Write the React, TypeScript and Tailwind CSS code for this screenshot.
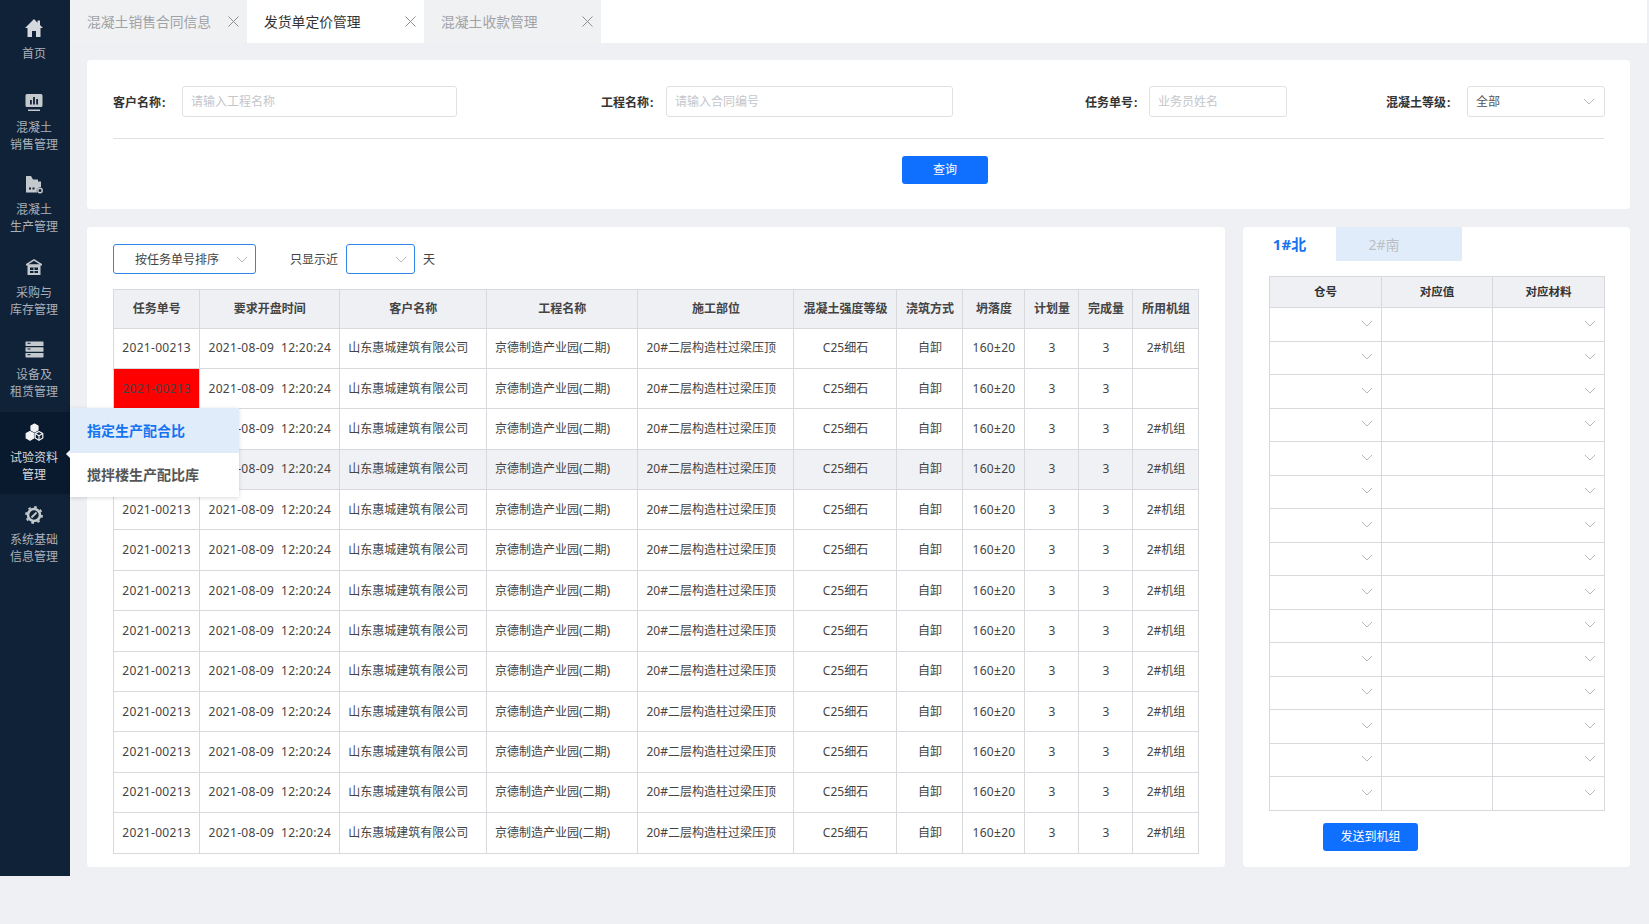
import React from "react";

const Chevron = ({ className = "" }: { className?: string }) => (
  <svg width="12" height="7" viewBox="0 0 12 7" fill="none" className={className}>
    <path d="M1 1l5 5 5-5" stroke="#b5b8bd" strokeWidth="1" />
  </svg>
);

const X = () => (
  <svg width="11" height="11" viewBox="0 0 11 11" fill="none">
    <path d="M0.5 0.5l10 10M10.5 0.5l-10 10" stroke="#8f8f8f" strokeWidth="1" />
  </svg>
);

const ic = "#c4c9ce";
const bg = "#102237";
const icons: Record<string, React.ReactNode> = {
  home: (
    <svg width="20" height="20" viewBox="0 0 20 20">
      <path d="M10 1L1 10h2.500v9h4.500v-6h4v6h4.500v-9H19l-3-3V2.500h-2.500v2.200z" fill="#d5d8dc" />
    </svg>
  ),
  chart: (
    <svg width="18" height="19" viewBox="0 0 18 19">
      <path d="M2 1h14a1.500 1.500 0 0 1 1.500 1.500v10a1.500 1.500 0 0 1-1.500 1.500H2a1.500 1.500 0 0 1-1.500-1.500v-10A1.500 1.500 0 0 1 2 1z" fill={ic} />
      <path d="M5 7h1.800v4.500H5zM8.100 4h1.800v7.500H8.100zM11.200 6h1.800v5.500h-1.800z" fill={bg} />
      <rect x="3" y="16.500" width="12" height="1.500" fill={ic} />
    </svg>
  ),
  factory: (
    <svg width="19" height="19" viewBox="0 0 19 19">
      <path d="M1 1h5l2 3.500h5v2h3V12a4 4 0 0 0-4 5.500H1z" fill={ic} />
      <rect x="4" y="12.500" width="2" height="2" fill={bg} />
      <rect x="7.500" y="12.500" width="2" height="2" fill={bg} />
      <circle cx="15" cy="15.500" r="2.200" fill="none" stroke={ic} strokeWidth="1.400" />
    </svg>
  ),
  store: (
    <svg width="18" height="18" viewBox="0 0 18 18">
      <path d="M9 1L1 6v1.500h1.500V17h13V7.500H17V6z" fill={ic} />
      <path d="M9 2.800L3.500 6.300h11z" fill={bg} />
      <path d="M5 9.500h8V15H5z" fill={bg} />
      <path d="M8.500 9.500h1V15h-1zM5 12h8v1H5z" fill={ic} />
    </svg>
  ),
  server: (
    <svg width="19" height="17" viewBox="0 0 19 17">
      <rect x="0.500" y="0.500" width="18" height="4.500" rx="0.600" fill={ic} />
      <rect x="0.500" y="6.200" width="18" height="4.500" rx="0.600" fill={ic} />
      <rect x="0.500" y="11.900" width="18" height="4.500" rx="0.600" fill={ic} />
      <path d="M2.500 2.300h3M2.500 8h3M2.500 13.700h3" stroke={bg} strokeWidth="1" />
    </svg>
  ),
  cubes: (
    <svg width="19" height="18" viewBox="0 0 19 18">
      <g stroke="#f2f3f4" strokeWidth="1.200" strokeLinejoin="round">
        <path d="M9.500 1l3.500 2v4l-3.500 2L6 7V3z" fill="#f2f3f4" />
        <path d="M5 8.500l3.800 2.100v4.400L5 17.200 1.200 15v-4.400z" fill="#f2f3f4" />
        <path d="M14 8.500l3.800 2.100v4.400L14 17.200 10.200 15v-4.400z" fill="#0a1a2e" />
        <path d="M10.200 10.600L14 12.800l3.800-2.200M14 12.800v4.400" fill="none" />
      </g>
    </svg>
  ),
  gear: (
    <svg width="18" height="18" viewBox="0 0 18 18" className="translate-y-[1px]">
      <circle cx="9" cy="9" r="6" fill="none" stroke={ic} strokeWidth="2.600" />
      <circle cx="9" cy="9" r="8" fill="none" stroke={ic} strokeWidth="1.800" strokeDasharray="2.700 3.580" />
      <path d="M6.500 11.500l5-5" stroke={ic} strokeWidth="1.800" />
    </svg>
  ),
};

const nav = [
  { icon: "home", lines: ["首页"] },
  { icon: "chart", lines: ["混凝土", "销售管理"] },
  { icon: "factory", lines: ["混凝土", "生产管理"] },
  { icon: "store", lines: ["采购与", "库存管理"] },
  { icon: "server", lines: ["设备及", "租赁管理"] },
  { icon: "cubes", lines: ["试验资料", "管理"], active: true },
  { icon: "gear", lines: ["系统基础", "信息管理"] },
];

const tabs = [
  { label: "混凝土销售合同信息", active: false },
  { label: "发货单定价管理", active: true },
  { label: "混凝土收款管理", active: false },
];

const headers = ["任务单号", "要求开盘时间", "客户名称", "工程名称", "施工部位", "混凝土强度等级", "浇筑方式", "坍落度", "计划量", "完成量", "所用机组"];
const rows = Array.from({ length: 13 }, (_, i) => i);

const Label = ({ text, w }: { text: string; w: string }) => (
  <span className={`${w} pt-[2px] text-[12px] font-bold text-[#333] whitespace-nowrap`}>
    {text}
    <span className="ml-[1px]">:</span>
  </span>
);

const Field = ({ label, labelW, inputW, placeholder, gap }: { label: string; labelW: string; inputW: string; placeholder: string; gap: string }) => (
  <div className={`flex items-center ${gap}`}>
    <Label text={label} w={labelW} />
    <div className={`${inputW} h-[31px] border border-[#dfe1e5] rounded-[3px] bg-white flex items-center pl-2 text-[12px] text-[#c4c6ca]`}>{placeholder}</div>
  </div>
);

const td = "border border-[#d8d9dc] text-center text-[12px] text-[#444] whitespace-nowrap p-0";
const tl = "border border-[#d8d9dc] text-left pl-[8px] text-[12px] text-[#444] whitespace-nowrap";

export default function App() {
  return (
    <div className="w-[1649px] h-[924px] bg-[#eef0f4] flex items-start overflow-hidden font-['Noto_Sans','Noto_Sans_CJK_SC',sans-serif]">
      <aside className="w-[70px] h-[876px] bg-[#102237] shrink-0">
        {nav.map((n) => (
          <div
            key={n.icon}
            className={`relative h-[82.4px] flex flex-col items-center justify-center pb-[2px] pr-[2px] ${n.active ? "bg-[#0a1a2e] text-[#d5d9dd]" : "text-[#a9b1ba]"}`}
          >
            <div className="h-[20px] flex items-center justify-center mb-[7px]">{icons[n.icon]}</div>
            {n.lines.map((l) => (
              <div key={l} className="text-[12px] leading-[17px] whitespace-nowrap">{l}</div>
            ))}
            {n.active && (
              <>
                <div className="absolute left-[66px] top-[38px] w-0 h-0 border-y-[4px] border-y-transparent border-r-[4px] border-r-white" />
                <div className="absolute left-[70px] top-[-4px] w-[169px] h-[89px] bg-white shadow-[0_1px_4px_rgba(0,0,0,0.15)] z-10">
                  <div className="h-[45px] bg-[#e1ecfb] flex items-center pl-[17px] text-[14px] font-bold text-[#1673f0]">指定生产配合比</div>
                  <div className="h-[44px] flex items-center pl-[17px] text-[14px] font-bold text-[#555]">搅拌楼生产配比库</div>
                </div>
              </>
            )}
          </div>
        ))}
      </aside>

      <main className="flex-1 min-w-0">
        <div className="h-[43px] bg-white mr-[2px] flex">
          {tabs.map((t) => (
            <div
              key={t.label}
              className={`w-[177px] flex items-center justify-between pl-[17px] pr-[8px] text-[13.800px] ${t.active ? "bg-white text-[#333]" : "bg-[#f0f1f3] text-[#a0a2a6]"}`}
            >
              <span className="whitespace-nowrap pt-[2px]">{t.label}</span>
              <X />
            </div>
          ))}
        </div>

        <div className="pl-[17px] pr-[19px] pt-[17px]">
          <section className="h-[149px] bg-white rounded-[4px] px-[26px] pt-[26px]">
            <div className="flex items-center">
              <Field label="客户名称" labelW="w-[69px]" inputW="w-[275px]" placeholder="请输入工程名称" gap="" />
              <Field label="工程名称" labelW="w-[65px]" inputW="w-[287px]" placeholder="请输入合同编号" gap="ml-[144px]" />
              <Field label="任务单号" labelW="w-[64px]" inputW="w-[138px]" placeholder="业务员姓名" gap="ml-[132px]" />
              <div className="flex items-center ml-[99px]">
                <Label text="混凝土等级" w="w-[81px]" />
                <div className="w-[138px] h-[31px] border border-[#dfe1e5] rounded-[3px] flex items-center justify-between pl-2 pr-[9px] text-[12px] text-[#555]">
                  全部
                  <Chevron />
                </div>
              </div>
            </div>
            <div className="mt-[21px] h-px bg-[#dfe0e3]" />
            <div className="mt-[17px] flex">
              <button className="ml-[789px] w-[86px] h-[28px] rounded-[3px] bg-[#0f6fff] text-white text-[12px]">查询</button>
            </div>
          </section>

          <div className="mt-[18px] flex gap-[18px]">
            <section className="w-[1138px] shrink-0 h-[640px] bg-white rounded-[4px] pl-[26px] pt-[17px]">
              <div className="flex items-center h-[30px]">
                <div className="w-[143px] h-[30px] border border-[#2f86e8] rounded-[3px] flex items-center justify-between pl-[21px] pr-[7px] text-[12px] text-[#444]">
                  <span className="pt-px">按任务单号排序</span>
                  <Chevron />
                </div>
                <span className="ml-[34px] pt-px text-[12px] text-[#444]">只显示近</span>
                <div className="ml-[8px] w-[69px] h-[30px] border border-[#2f86e8] rounded-[3px] flex items-center justify-end pr-[7px]">
                  <Chevron />
                </div>
                <span className="ml-[8px] pt-px text-[12px] text-[#444]">天</span>
              </div>
              <table className="mt-[15px] table-fixed border-collapse w-[1085.5px]">
                <colgroup>
                  <col className="w-[86.300px]" />
                  <col className="w-[140px]" />
                  <col className="w-[146.700px]" />
                  <col className="w-[151.500px]" />
                  <col className="w-[156px]" />
                  <col className="w-[103px]" />
                  <col className="w-[66px]" />
                  <col className="w-[62px]" />
                  <col className="w-[54px]" />
                  <col className="w-[54px]" />
                  <col className="w-[66px]" />
                </colgroup>
                <thead>
                  <tr className="h-[38.500px] bg-[#eff0f4]">
                    {headers.map((h) => (
                      <th key={h} className={`${td} font-bold text-[#333]`}>{h}</th>
                    ))}
                  </tr>
                </thead>
                <tbody>
                  {rows.map((i) => (
                    <tr key={i} className={`h-[40.400px] ${i === 3 ? "bg-[#f0f1f5]" : ""}`}>
                      <td className={`${td} ${i === 1 ? "bg-[#ff0000]" : ""} tracking-[0.3px]`}>2021-00213</td>
                      <td className={`${td} tracking-[0.3px]`}>2021-08-09&nbsp;&nbsp;12:20:24</td>
                      <td className={tl}>山东惠城建筑有限公司</td>
                      <td className={tl}>京德制造产业园(二期)</td>
                      <td className={tl}>20#二层构造柱过梁压顶</td>
                      <td className={td}>C25细石</td>
                      <td className={td}>自卸</td>
                      <td className={`${td} tracking-[0.3px]`}>160±20</td>
                      <td className={td}>3</td>
                      <td className={td}>3</td>
                      <td className={td}>{i === 1 ? "" : "2#机组"}</td>
                    </tr>
                  ))}
                </tbody>
              </table>
            </section>

            <section className="flex-1 min-w-0 h-[640px] bg-white rounded-[4px]">
              <div className="flex h-[34px]">
                <div className="w-[93px] flex items-center justify-center text-[15px] font-bold text-[#1673f0]">1#北</div>
                <div className="w-[126px] bg-[#e1ecfb] flex items-center justify-center pr-[30px] text-[14px] text-[#bcbfc4]">2#南</div>
              </div>
              <div className="pl-[26px] pr-[26px] pt-[15px]">
                <table className="table-fixed border-collapse w-full">
                  <colgroup>
                    <col className="w-[112px]" />
                    <col className="w-[111px]" />
                    <col className="w-[112px]" />
                  </colgroup>
                  <thead>
                    <tr className="h-[31px] bg-[#eff0f4]">
                      {["仓号", "对应值", "对应材料"].map((h) => (
                        <th key={h} className="border border-[#d8d9dc] text-center text-[11.500px] font-bold text-[#333] p-0">{h}</th>
                      ))}
                    </tr>
                  </thead>
                  <tbody>
                    {Array.from({ length: 15 }, (_, i) => (
                      <tr key={i} className="h-[33.500px]">
                        <td className="border border-[#d8d9dc] p-0">
                          <div className="flex justify-end pr-[8px] pb-[2px]"><Chevron /></div>
                        </td>
                        <td className="border border-[#d8d9dc] p-0" />
                        <td className="border border-[#d8d9dc] p-0">
                          <div className="flex justify-end pr-[8px] pb-[2px]"><Chevron /></div>
                        </td>
                      </tr>
                    ))}
                  </tbody>
                </table>
                <button className="block mt-[12px] ml-[54px] w-[95px] h-[28px] rounded-[3px] bg-[#0f6fff] text-white text-[12px]">发送到机组</button>
              </div>
            </section>
          </div>
        </div>
      </main>
    </div>
  );
}
